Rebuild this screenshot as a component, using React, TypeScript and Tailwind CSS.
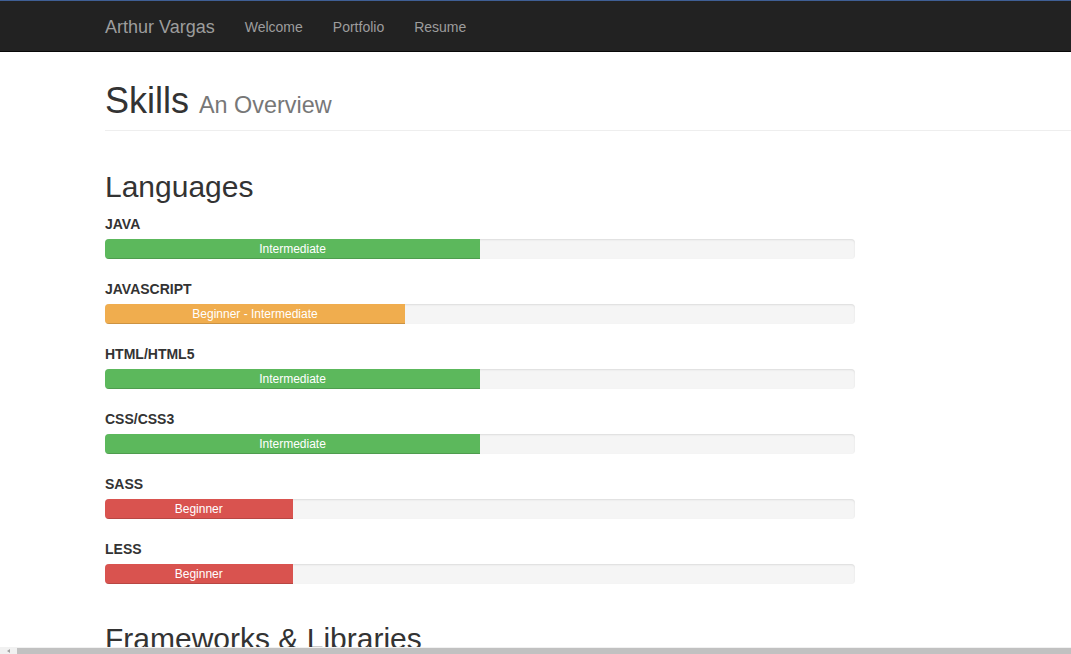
const skills = [
  { name: 'JAVA', level: 'Intermediate', pct: 50, color: 'bg-[#5cb85c]' },
  { name: 'JAVASCRIPT', level: 'Beginner - Intermediate', pct: 40, color: 'bg-[#f0ad4e]' },
  { name: 'HTML/HTML5', level: 'Intermediate', pct: 50, color: 'bg-[#5cb85c]' },
  { name: 'CSS/CSS3', level: 'Intermediate', pct: 50, color: 'bg-[#5cb85c]' },
  { name: 'SASS', level: 'Beginner', pct: 25, color: 'bg-[#d9534f]' },
  { name: 'LESS', level: 'Beginner', pct: 25, color: 'bg-[#d9534f]' },
];

const SkillBar = ({ name, level, pct, color }: (typeof skills)[number]) => (
  <div className="mb-[20px]">
    <div className="text-[14px] leading-[20px] font-bold text-[#333] mb-[5px]">{name}</div>
    <div className="w-[750px] h-[20px] rounded-[4px] bg-[#f5f5f5] overflow-hidden shadow-[inset_0_1px_2px_rgba(0,0,0,0.1)] flex">
      <div
        className={`${color} h-full text-white text-[12px] leading-[20px] text-center shadow-[inset_0_-1px_0_rgba(0,0,0,0.15)]`}
        style={{ width: `${pct}%` }}
      >
        {level}
      </div>
    </div>
  </div>
);

export default function App() {
  return (
    <div className="w-[1071px] h-[654px] overflow-hidden flex flex-col bg-white font-['Liberation_Sans',Arial,sans-serif]">
      <div className="flex-1 overflow-hidden">
        {/* Navbar */}
        <nav className="h-[52px] bg-[#222] border-t border-t-[#3f5f95] border-b border-b-[#080808]">
          <div className="flex items-center h-full pl-[105px] pt-[2px]">
            <span className="text-[18px] leading-[20px] text-[#9d9d9d] pr-[15px]">Arthur Vargas</span>
            <ul className="flex text-[14px] leading-[20px] text-[#9d9d9d]">
              <li className="px-[15px]">Welcome</li>
              <li className="px-[15px]">Portfolio</li>
              <li className="px-[15px]">Resume</li>
            </ul>
          </div>
        </nav>

        <div className="pl-[105px] pt-[29px] w-[1300px]">
          {/* Page header */}
          <div className="pb-[9px] border-b border-[#eee]">
            <h1 className="text-[36px] leading-[1.1] text-[#333]">
              Skills <small className="text-[23.4px] text-[#777]">An Overview</small>
            </h1>
          </div>

          <h2 className="mt-[39px] mb-[11px] text-[30px] leading-[33px] text-[#333]">Languages</h2>
          {skills.map((s) => (
            <SkillBar key={s.name} {...s} />
          ))}

          <h2 className="mt-[38px] text-[30px] leading-[33px] text-[#333]">Frameworks &amp; Libraries</h2>
        </div>
      </div>

      {/* Horizontal scrollbar */}
      <div className="h-[7px] bg-[#f1f1f1] flex shrink-0">
        <div className="w-[17px] flex items-end justify-center pb-[1px]">
          <div className="w-0 h-0 border-y-[2px] border-y-transparent border-r-[3px] border-r-[#a3a3a3]" />
        </div>
        <div className="flex-1 mt-[1px] bg-[#c1c1c1]" />
      </div>
    </div>
  );
}
